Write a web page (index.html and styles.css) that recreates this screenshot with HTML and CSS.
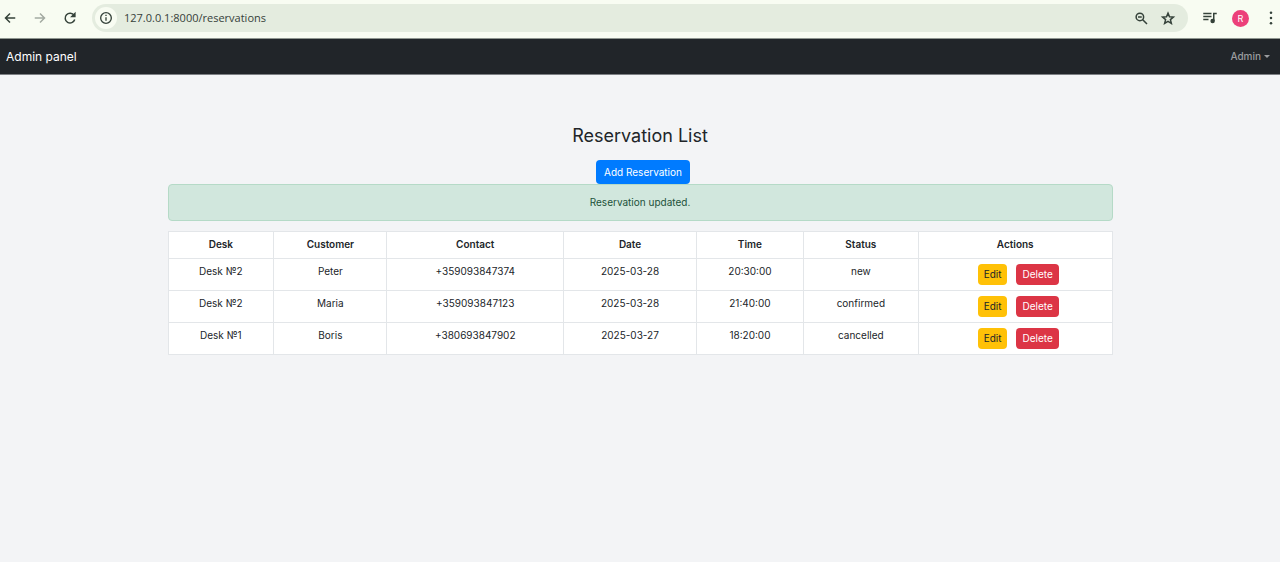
FILE: index.html
```html
<!DOCTYPE html>
<html lang="en">
<head>
<meta charset="utf-8">
<title>Reservation List</title>
<link rel="stylesheet" href="styles.css">
</head>
<body>
<div class="browser">
  <div class="nav-buttons">
    <button class="icon-btn" type="button" aria-label="Back"><svg width="18" height="18" viewBox="0 0 24 24"><path d="M19 12H6M12 6l-6 6 6 6"/></svg></button>
    <button class="icon-btn muted" type="button" aria-label="Forward"><svg width="18" height="18" viewBox="0 0 24 24"><path d="M5 12h13M12 6l6 6-6 6"/></svg></button>
    <button class="icon-btn" type="button" aria-label="Reload"><svg width="18" height="18" viewBox="0 0 24 24"><path d="M17.500 8.500a6.500 6.500 0 1 0 .8 5.500"/><path class="solid" d="M18.500 6v4h-4z"/></svg></button>
  </div>
  <div class="address">
    <button class="icon-btn site-info" type="button" aria-label="Site information"><svg width="16" height="16" viewBox="0 0 24 24"><circle cx="12" cy="12" r="8"/><path d="M12 11v5M12 7v2"/></svg></button>
    <input class="url" type="text" aria-label="Address" value="127.0.0.1:8000/reservations">
    <button class="icon-btn" type="button" aria-label="Zoom"><svg width="18" height="18" viewBox="0 0 24 24"><circle cx="10.500" cy="10.500" r="5"/><path d="M14 14l6 6M8 10.500h5"/></svg></button>
    <button class="icon-btn" type="button" aria-label="Bookmark"><svg width="18" height="18" viewBox="0 0 24 24"><path d="M12 5.500l2 4.800 5.200.4-4 3.400 1.300 5.100-4.500-2.700-4.500 2.700 1.300-5.100-4-3.400 5.200-.4z"/></svg></button>
  </div>
  <div class="tools">
    <button class="icon-btn" type="button" aria-label="Media"><svg width="18" height="18" viewBox="0 0 24 24"><path d="M3 6h11M3 10h11M3 14h7M17 16V6h4"/><circle class="solid" cx="15.500" cy="16" r="2"/></svg></button>
    <button class="profile" type="button" aria-label="Profile">R</button>
    <button class="icon-btn" type="button" aria-label="Menu"><svg width="18" height="18" viewBox="0 0 24 24"><circle class="dot" cx="12" cy="5" r="1.700"/><circle class="dot" cx="12" cy="12" r="1.700"/><circle class="dot" cx="12" cy="19" r="1.700"/></svg></button>
  </div>
</div>
<header class="navbar">
  <a class="brand" href="#">Admin panel</a>
  <button class="user-menu" type="button">Admin</button>
</header>
<main class="container">
  <h1 class="title">Reservation List</h1>
  <a class="btn btn-primary" href="#">Add Reservation</a>
  <div class="alert" role="status">Reservation updated.</div>
  <table class="table">
    <colgroup><col class="c-desk"><col class="c-customer"><col class="c-contact"><col class="c-date"><col class="c-time"><col class="c-status"><col></colgroup>
    <thead>
      <tr><th>Desk</th><th>Customer</th><th>Contact</th><th>Date</th><th>Time</th><th>Status</th><th>Actions</th></tr>
    </thead>
    <tbody>
      <tr><td>Desk №2</td><td>Peter</td><td>+359093847374</td><td>2025-03-28</td><td>20:30:00</td><td>new</td><td><div class="actions"><a class="btn btn-sm btn-warning" href="#">Edit</a><button class="btn btn-sm btn-danger" type="button">Delete</button></div></td></tr>
      <tr><td>Desk №2</td><td>Maria</td><td>+359093847123</td><td>2025-03-28</td><td>21:40:00</td><td>confirmed</td><td><div class="actions"><a class="btn btn-sm btn-warning" href="#">Edit</a><button class="btn btn-sm btn-danger" type="button">Delete</button></div></td></tr>
      <tr><td>Desk №1</td><td>Boris</td><td>+380693847902</td><td>2025-03-27</td><td>18:20:00</td><td>cancelled</td><td><div class="actions"><a class="btn btn-sm btn-warning" href="#">Edit</a><button class="btn btn-sm btn-danger" type="button">Delete</button></div></td></tr>
    </tbody>
  </table>
</main>
</body>
</html>
```
FILE: styles.css
```css
* { box-sizing: border-box; }
body {
  margin: 0;
  background: #f3f4f6;
  color: #212529;
  font: 10px/15px Inter, sans-serif;
}
a { text-decoration: none; }
button { font: inherit; border: 0; cursor: pointer; }

.browser {
  display: flex;
  align-items: center;
  gap: 13px;
  height: 39px;
  padding-bottom: 2px;
  background: #f8fcf2;
  border-bottom: 1px solid #8f9690;
}
.nav-buttons { display: flex; gap: 12px; padding-left: 1px; }
.icon-btn {
  display: flex;
  padding: 0;
  background: none;
  color: #35423a;
}
.icon-btn svg {
  fill: none;
  stroke: currentColor;
  stroke-width: 2;
}
.icon-btn .solid { fill: currentColor; }
.icon-btn .dot { fill: currentColor; stroke: none; }
.icon-btn.muted { color: #a3aaa2; }
.address {
  display: flex;
  flex: 1;
  align-items: center;
  gap: 9px;
  height: 28px;
  padding: 0 11px 0 3px;
  border-radius: 14px;
  background: #e4ecdf;
}
.icon-btn.site-info {
  padding: 3px;
  border-radius: 50%;
  background: #f8fcf2;
}
.url {
  flex: 1;
  min-width: 0;
  margin-left: -2px;
  padding: 0;
  border: 0;
  background: none;
  color: #36413a;
  font: 11px/18px "Open Sans", sans-serif;
}
.tools { display: flex; align-items: center; gap: 13px; }
.profile {
  width: 17px;
  height: 17px;
  padding: 0;
  border-radius: 50%;
  background: #ec407a;
  color: #fff;
  font-size: 9px;
}

.navbar {
  display: flex;
  align-items: center;
  justify-content: space-between;
  height: 36px;
  padding: 0 10px 1px 6px;
  background: #212529;
  border-bottom: 1px solid #7d8084;
}
.brand { color: #fff; font-size: 12px; }
.user-menu {
  display: flex;
  align-items: center;
  gap: 3px;
  padding: 0;
  background: none;
  color: #9b9d9f;
  font-weight: 500;
}
.user-menu::after {
  content: "";
  border: 3px solid transparent;
  border-top-color: currentColor;
  border-bottom: 0;
}

.container {
  display: flex;
  flex-direction: column;
  align-items: center;
  width: 90%;
  max-width: 945px;
  margin: 0 auto;
  padding-top: 47px;
}
.title {
  margin: 0 0 10px;
  font-size: 18px;
  font-weight: 400;
  line-height: 28px;
}
.btn {
  padding: 4px 8px;
  border-radius: 4px;
  line-height: 16px;
  text-align: center;
}
.btn-primary { margin-left: 6px; background: #007bff; color: #fff; }
.btn-sm { padding: 3px 6px; line-height: 15px; }
.btn-warning { background: #ffc107; color: #212529; }
.btn-danger { background: #dc3545; color: #fff; }
.alert {
  align-self: stretch;
  margin-bottom: 10px;
  padding: 10px;
  border: 1px solid #b5dac7;
  border-radius: 4px;
  background: #d1e7dd;
  color: #21523a;
  text-align: center;
}
.table {
  width: 100%;
  table-layout: fixed;
  border-collapse: collapse;
  background: #fff;
  text-align: center;
}
.table th, .table td {
  padding: 5px;
  border: 1px solid #e3e6e9;
  vertical-align: top;
}
.table th { padding-bottom: 6px; font-weight: 600; }
.c-desk { width: 11.2%; }
.c-customer { width: 12%; }
.c-contact { width: 18.7%; }
.c-date { width: 14.1%; }
.c-time { width: 11.3%; }
.c-status { width: 12.2%; }
.actions { display: flex; justify-content: center; gap: 9px; padding-left: 6px; }
```
